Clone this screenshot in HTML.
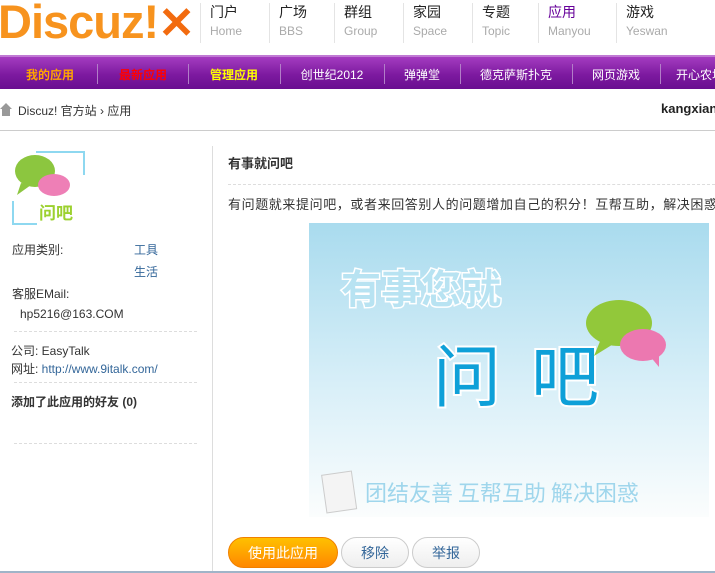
<!DOCTYPE html>
<html><head><meta charset="utf-8"><style>
*{margin:0;padding:0;box-sizing:border-box}
body{width:715px;height:573px;overflow:hidden;background:#fff;font-family:"Liberation Sans","Noto Sans CJK SC",sans-serif;font-size:12px;color:#333;position:relative}
.a{position:absolute;white-space:nowrap}
.logo{left:-2px;top:-3px;font-size:47px;font-weight:bold;color:#f7931e;letter-spacing:-1px;line-height:50px;font-family:"Liberation Sans",sans-serif}
.nav{top:3px;height:40px;border-left:1px solid #e4e4e4;padding-left:9px}
.nav b{display:block;font-size:14px;color:#222;line-height:18px;font-weight:normal}
.nav i{display:block;font-style:normal;font-size:12px;color:#aaa;line-height:20px}
.bar{left:0;top:55px;width:715px;height:34px;background:linear-gradient(#a43cc0,#7d1aa0 55%,#6a0e90);border-top:2px solid #c07ad4}
.bar span{position:absolute;top:9px;font-size:12px;color:#fff;transform:translateX(-50%)}
.sep{position:absolute;top:7px;width:1px;height:20px;background:#b27ec8}
.dash{position:absolute;border-top:1px dashed #ddd}
.btn{position:absolute;top:537px;height:31px;border-radius:16px;text-align:center;line-height:30px;font-size:14px}
</style></head><body>
<div class="a logo">Discuz!<span style="color:#f26b0f;font-size:44px">✕</span></div>
<div class="a nav" style="left:200px;background:#fff"><b>门户</b><i>Home</i></div>
<div class="a nav" style="left:269px"><b>广场</b><i>BBS</i></div>
<div class="a nav" style="left:334px"><b>群组</b><i>Group</i></div>
<div class="a nav" style="left:403px"><b>家园</b><i>Space</i></div>
<div class="a nav" style="left:472px"><b>专题</b><i>Topic</i></div>
<div class="a nav" style="left:538px"><b style="color:#660099">应用</b><i>Manyou</i></div>
<div class="a nav" style="left:616px"><b>游戏</b><i>Yeswan</i></div>
<div class="a bar">
<span style="left:50px;color:#ffa500;font-weight:bold">我的应用</span><div class="sep" style="left:97px"></div>
<span style="left:143px;color:#f00;font-weight:bold">最新应用</span><div class="sep" style="left:188px"></div>
<span style="left:234px;color:#ff0;font-weight:bold">管理应用</span><div class="sep" style="left:280px"></div>
<span style="left:332px">创世纪2012</span><div class="sep" style="left:384px"></div>
<span style="left:422px">弹弹堂</span><div class="sep" style="left:460px"></div>
<span style="left:516px">德克萨斯扑克</span><div class="sep" style="left:572px"></div>
<span style="left:616px">网页游戏</span><div class="sep" style="left:660px"></div>
<span style="left:700px">开心农场</span>
</div>
<div class="a" style="left:0;top:102px;width:12px;height:14px"><svg width="12" height="14"><path d="M0 7 L6 1 L12 7 L10 7 L10 14 L2 14 L2 7Z" fill="#999"/></svg></div>
<div class="a" style="left:18px;top:102px">Discuz! 官方站 › 应用</div>
<div class="a" style="left:661px;top:101px;font-weight:bold;font-size:13px;color:#222">kangxian</div>
<div class="a" style="left:0;top:130px;width:715px;height:1px;background:#ccc"></div>
<div class="a" style="left:212px;top:146px;width:1px;height:427px;background:#ddd"></div>
<div class="a" style="left:11px;top:151px;width:75px;height:75px">
<svg width="75" height="75"><path d="M25 1H73V24M2 50V73H26" stroke="#8ed8f0" stroke-width="2" fill="none"/><ellipse cx="24" cy="20" rx="20" ry="16" fill="#8cc63f"/><path d="M10 32 L6 44 L20 34Z" fill="#8cc63f"/><ellipse cx="43" cy="34" rx="16" ry="11" fill="#ee7fb6"/><text x="28" y="68" font-size="17" font-weight="bold" fill="#9cd12f" font-family="Noto Sans CJK SC,sans-serif">问吧</text></svg></div>
<div class="a" style="left:12px;top:241px">应用类别:</div>
<div class="a" style="left:134px;top:241px;color:#336699">工具</div>
<div class="a" style="left:134px;top:263px;color:#336699">生活</div>
<div class="a" style="left:12px;top:285px">客服EMail:</div>
<div class="a" style="left:20px;top:307px">hp5216@163.COM</div>
<div class="dash" style="left:14px;top:331px;width:183px"></div>
<div class="a" style="left:11px;top:342px">公司: EasyTalk</div>
<div class="a" style="left:11px;top:360px">网址: <span style="color:#336699">http://www.9italk.com/</span></div>
<div class="dash" style="left:14px;top:382px;width:183px"></div>
<div class="a" style="left:11px;top:393px;font-weight:bold">添加了此应用的好友 (0)</div>
<div class="dash" style="left:14px;top:443px;width:183px"></div>
<div class="a" style="left:228px;top:153px;font-weight:bold;font-size:13px">有事就问吧</div>
<div class="dash" style="left:228px;top:184px;width:487px"></div>
<div class="a" style="left:228px;top:194px;font-size:13px;letter-spacing:0.6px">有问题就来提问吧，或者来回答别人的问题增加自己的积分！互帮互助，解决困惑</div>
<div class="a" style="left:309px;top:223px;width:400px;height:294px;background:linear-gradient(#a9dbee,#d8eff8 55%,#fbfdfd)">
<svg width="400" height="294" style="position:absolute;left:0;top:0" font-family="Noto Sans CJK SC,sans-serif">
<text x="32" y="80" font-size="40" font-weight="bold" fill="#b8e3f2" stroke="#fff" stroke-width="3" paint-order="stroke">有事您就</text>
<text x="124" y="178" font-size="68" fill="#0ea0d8" stroke="#fff" stroke-width="4" paint-order="stroke" letter-spacing="30">问吧</text>
<ellipse cx="310" cy="100" rx="33" ry="23" fill="#92c83a"/><path d="M292 116 L285 133 L306 120Z" fill="#92c83a"/>
<ellipse cx="334" cy="122" rx="23" ry="16" fill="#ec78b0"/><path d="M340 132 L350 144 L350 132Z" fill="#ec78b0"/>
<rect x="15" y="250" width="30" height="38" fill="#f4f4f4" stroke="#ccc" transform="rotate(-8 30 268)"/>
<text x="56" y="278" font-size="22" fill="#9fd6ec">团结友善 互帮互助 解决困惑</text>
</svg></div>
<div class="btn" style="left:228px;width:110px;background:linear-gradient(#ffc000,#ff8800);color:#fff;border:1px solid #f08000">使用此应用</div>
<div class="btn" style="left:341px;width:68px;background:linear-gradient(#fff,#eee);border:1px solid #ccc;color:#336699">移除</div>
<div class="btn" style="left:412px;width:68px;background:linear-gradient(#fff,#eee);border:1px solid #ccc;color:#336699">举报</div>
<div class="a" style="left:0;top:571px;width:715px;height:2px;background:#a0b4c8"></div>
</body></html>
